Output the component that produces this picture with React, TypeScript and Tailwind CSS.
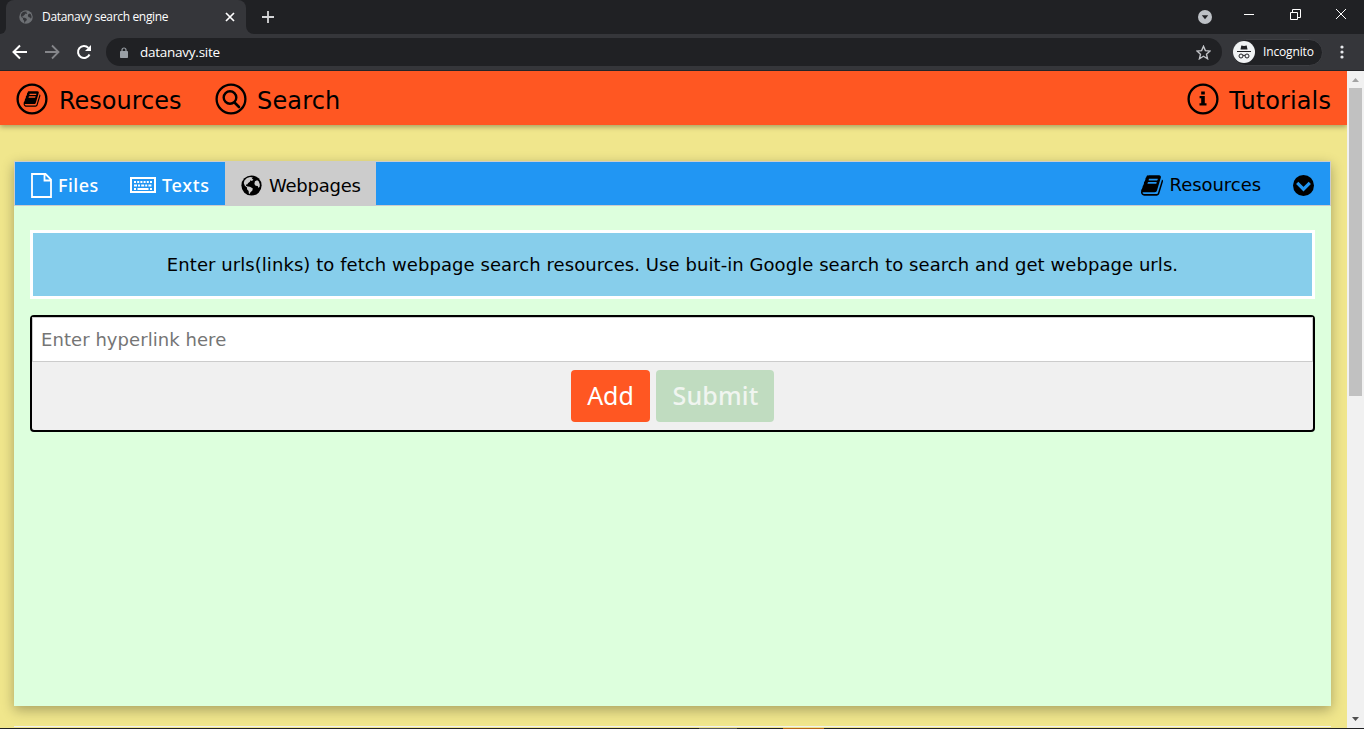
import React from "react";

const BOOK =
  "M1639 478q40 57 18 129l-275 906q-19 64-76.500 107.500t-122.500 43.500h-923q-77 0-148.500-53.500t-99.500-131.500q-24-67-2-127 0-4 3-27t4-37q1-8-3-21.500t-3-19.500q2-11 8-21t16.500-23.500 16.500-23.500q23-38 45-91.500t30-91.500q3-10 .5-30t-.5-28q3-11 17-28t17-23q21-36 42-92t25-90q1-9-2.500-32t.5-28q4-13 22-30.500t22-22.500q19-26 42.500-84.500t27.500-96.500q1-8-3-25.500t-2-26.500q2-8 9-18t18-23 17-21q8-12 16.500-30.500t15-35 16-36 19.500-32 26.500-23.500 36-11.500 47.500 5.500l-1 3q38-9 51-9h761q74 0 114 56t18 130l-274 906q-36 119-71.500 153.500t-128.500 34.500h-869q-27 0-38 15-11 16-1 43 24 70 144 70h923q29 0 56-15.500t35-41.500l300-987q7-22 5-57 38 15 59 43zm-1064 2q-4 13 2 22.500t20 9.500h608q13 0 25.500-9.500t16.500-22.500l21-64q4-13-2-22.500t-20-9.500h-608q-13 0-25.500 9.500t-16.500 22.500zm-83 256q-4 13 2 22.500t20 9.500h608q13 0 25.500-9.500t16.500-22.500l21-64q4-13-2-22.500t-20-9.500h-608q-13 0-25.500 9.500t-16.500 22.500z";

function BookIcon({ className }: { className: string }) {
  return (
    <svg viewBox="0 128 1664 1536" className={className} fill="currentColor">
      <path d={BOOK} />
    </svg>
  );
}

function Globe({ className, land }: { className: string; land: string }) {
  return (
    <svg viewBox="0 0 22 22" className={className}>
      <circle cx="11" cy="11" r="10.6" fill="currentColor" />
      <g fill={land}>
        <path d="M3.600 5.800 6.200 3.200 9.500 2.200 12.500 2.600 11.300 3.600 13 5 11.400 6.400 9.900 5.600 9.300 7.200 7.500 8.500 6.500 10 5.200 9.900 5.300 11.300 7 12 9.400 12.300 12.400 14.200 11.800 16.600 9.900 18 9.200 19.900 8.200 19.500 8 16.800 6.300 15 6.300 13.100 4 11.300 2.900 8.300z" />
        <path d="M14.600 6.600 16.900 5.400 18.500 6.500 19.700 9.700 19.600 12 18.400 13.600 17.500 11.600 15.300 11.200 14 9.300z" />
      </g>
    </svg>
  );
}

function Ring({ children }: { children: React.ReactNode }) {
  return (
    <svg viewBox="0 0 32 32" className="mb-0.5 size-8 shrink-0">
      <circle cx="16" cy="16" r="14.400" fill="none" stroke="currentColor" strokeWidth="2.300" />
      {children}
    </svg>
  );
}

function Browser() {
  return (
    <div className="h-[71px] bg-[#202124] font-['Open_Sans','Noto_Sans',sans-serif] text-white">
      <div className="flex h-[34px] items-end">
        <div className="h-2 w-1.5 shrink-0 bg-[#35363a]">
          <div className="h-2 w-1.5 rounded-br-[6px] bg-[#202124]" />
        </div>
        <div className="flex h-[34px] w-[240px] shrink-0 items-center rounded-t-lg bg-[#35363a] pl-[13px] pr-[11px]">
          <Globe className="size-[14px] text-[#6d7074]" land="#35363a" />
          <span className="ml-[9px] whitespace-nowrap text-[12px] tracking-[-0.33px]">Datanavy search engine</span>
          <svg viewBox="0 0 10 10" className="ml-auto size-[10px]" fill="none" stroke="#fff" strokeWidth="1.700"><path d="M1 1l8 8M9 1l-8 8" /></svg>
        </div>
        <div className="h-2 w-2 shrink-0 bg-[#35363a]">
          <div className="size-2 rounded-bl-lg bg-[#202124]" />
        </div>
        <div className="flex h-[34px] grow items-center pl-2">
          <svg viewBox="0 0 12 12" className="size-3" stroke="#d5d6d8" strokeWidth="1.800"><path d="M6 0v12M0 6h12" /></svg>
          <svg viewBox="0 0 14 14" className="ml-auto size-[14px]"><circle cx="7" cy="7" r="7" fill="#bdc1c6" /><path d="M3.800 5.300h6.400L7 9.300z" fill="#202124" /></svg>
          <svg viewBox="0 0 108 14" className="mb-[6px] ml-7 mr-4 h-[14px] w-[108px]" fill="none" stroke="#fff">
            <path d="M4 7.500h10M50.500 5.500h7v7h-7zM52.500 5v-2.500h8v8H58M96 2l10 10M106 2l-10 10" />
          </svg>
        </div>
      </div>
      <div className="flex h-[37px] items-center border-b border-[#242528] bg-[#35363a] pl-3 pr-[20px]">
        <svg viewBox="0 0 16 16" className="size-4 shrink-0" fill="none" stroke="#fff" strokeWidth="2"><path d="M15 8H2M8 1.500 1.500 8 8 14.500" /></svg>
        <svg viewBox="0 0 16 16" className="ml-4 size-4 shrink-0" fill="none" stroke="#85868a" strokeWidth="1.800"><path d="M1 8h13M8 1.500 14.500 8 8 14.500" /></svg>
        <svg viewBox="0 0 16 16" className="ml-4 size-4 shrink-0" fill="none" stroke="#fff" strokeWidth="2"><path d="M13.500 10.500A6 6 0 1 1 12.400 3.900" /><path d="M15 1v6H9z" fill="#fff" stroke="none" /></svg>
        <div className="ml-[14px] flex h-7 w-[1116px] shrink-0 items-center rounded-full bg-[#202124] pl-3.5 pr-[11px]">
          <svg viewBox="0 0 8 11" className="h-[11px] w-2"><path d="M2 5V3a2 2 0 0 1 4 0v2" fill="none" stroke="#9aa0a6" strokeWidth="1.200" /><rect y="4" width="8" height="7" rx=".8" fill="#9aa0a6" /></svg>
          <span className="ml-3 text-[13.5px] tracking-[-0.25px]">datanavy.site</span>
          <svg viewBox="0 0 24 24" className="ml-auto size-[15px]" fill="none" stroke="#c3c5c9" strokeWidth="2.200"><path d="m12 2 3 7 7.500.6-5.700 5 1.700 7.400-6.500-4-6.500 4 1.700-7.400-5.700-5L9 9z" /></svg>
        </div>
        <div className="ml-[10px] flex h-[27px] w-[91px] shrink-0 items-center rounded-full border border-[#3d3e42] bg-[#202124]">
          <svg viewBox="0 0 22 22" className="size-[22px] shrink-0"><circle cx="11" cy="11" r="11" fill="#f1f3f4" /><path d="M7.500 8.500 8.300 4.500 11 5l2.700-.5.800 4z" fill="#202124" /><path d="M4 10.500h14M10 14.500q1-.7 2 0" stroke="#202124" fill="none" /><circle cx="8" cy="15" r="2" fill="none" stroke="#202124" /><circle cx="14" cy="15" r="2" fill="none" stroke="#202124" /></svg>
          <span className="ml-[8px] text-[12px] tracking-[-0.15px]">Incognito</span>
        </div>
        <svg viewBox="0 0 4 14" className="ml-auto h-[14px] w-1 shrink-0" fill="#e8eaed"><circle cx="2" cy="2" r="1.600" /><circle cx="2" cy="7" r="1.600" /><circle cx="2" cy="12" r="1.600" /></svg>
      </div>
    </div>
  );
}

function Header() {
  return (
    <header className="relative flex h-[54px] shrink-0 items-center bg-[#ff5722] px-4 pt-1 text-[24px] shadow-[0_2px_5px_rgba(0,0,0,0.3)]">
      <Ring><path d={BOOK} fill="currentColor" transform="translate(7.600 6.900) scale(0.0101)" /></Ring>
      <span className="ml-[11px] mt-px w-[122px] whitespace-nowrap">Resources</span>
      <span className="w-[34px]" />
      <Ring><path d="M20 20 24 24" stroke="currentColor" strokeWidth="2.600" strokeLinecap="round" /><circle cx="15" cy="14.500" r="6.300" fill="none" stroke="currentColor" strokeWidth="2.400" /></Ring>
      <span className="ml-[10px] mt-px tracking-[0.15px]">Search</span>
      <span className="grow" />
      <Ring><path d="M14.200 8.500h3.600v3h-3.600zM12.600 13h5.200v7.200h1.700v2.300h-7v-2.300h1.700v-4.900h-1.600z" fill="currentColor" /></Ring>
      <span className="ml-[10px] mt-px tracking-[0.1px]">Tutorials</span>
    </header>
  );
}

function TabBar() {
  return (
    <div className="flex h-[45px] border border-[#ccc] bg-[#2196f3] text-[18px]">
      <div className="flex items-center pl-4 pt-[3px] font-['Noto_Sans',sans-serif] font-medium text-white">
        <svg viewBox="0 0 21 25" className="h-[25px] w-[21px]" fill="none" stroke="currentColor" strokeWidth="1.800"><path d="M1 1h13.500L20 6.500V24H1zM13.500 1v6.500H20" /></svg>
        <span className="ml-[6px] w-10 tracking-[0.5px]">Files</span>
        <svg viewBox="0 0 26 16" className="ml-8 h-4 w-[26px]" fill="none" stroke="currentColor">
          <rect x="1" y="1" width="24" height="14" strokeWidth="2" />
          <path d="M4 5h18" strokeWidth="2" strokeDasharray="2 1.200" />
          <path d="M4 8.500h18" strokeWidth="2" strokeDasharray="3 1 2 1.200" />
          <path d="M4 12h2M7.500 12h11M20 12h2" strokeWidth="2" />
        </svg>
        <span className="ml-1.5 w-[47px] tracking-[0.7px]">Texts</span>
      </div>
      <div className="ml-4 flex w-[151px] items-center bg-[#ccc] pl-4 pt-[3px]">
        <Globe className="size-[21px] shrink-0" land="#ccc" />
        <span className="ml-[7px] tracking-[-0.25px]">Webpages</span>
      </div>
      <div className="ml-auto flex items-center pr-4 pt-[3px]">
        <BookIcon className="h-[21px] w-[22px]" />
        <span className="mb-0.5 ml-[7px] tracking-[-0.05px]">Resources</span>
        <svg viewBox="0 0 20 20" className="ml-8 size-[21px]"><circle cx="10" cy="10" r="10" fill="#000" /><path d="m4 7.500 6 6 6-6" fill="none" stroke="#2196f3" strokeWidth="3" /></svg>
      </div>
    </div>
  );
}

export default function App() {
  return (
    <div className="flex h-[729px] w-[1364px] flex-col overflow-hidden bg-[#f0e68c] font-['DejaVu_Sans',sans-serif] leading-normal text-black">
      <Browser />
      <div className="flex h-[657px]">
        <div className="flex w-[1347px] flex-col overflow-hidden">
          <Header />
          <main className="ml-[14px] mt-9 h-[545px] w-[1317px] shrink-0 bg-[#ddffdd] shadow-[0_4px_12px_rgba(0,0,0,0.3)]">
            <TabBar />
            <div className="flex flex-col gap-4 px-4 pt-6">
              <p className="flex h-[69px] items-center justify-center border-3 border-white bg-[#87ceeb] text-[18px] tracking-[0.065px]">
                Enter urls(links) to fetch webpage search resources. Use buit-in Google search to search and get webpage urls.
              </p>
              <section className="h-[117px] rounded border-2 border-black bg-[#f0f0f0]">
                <input className="block h-[45px] w-full border border-[#ccc] bg-white px-2 text-[18px] tracking-[0.06px] placeholder:text-[#757575]" placeholder="Enter hyperlink here" />
                <div className="flex justify-center gap-1.5 pt-2 font-['Noto_Sans',sans-serif] text-[25px] text-white">
                  <button className="h-[52px] w-[79px] rounded bg-[#ff5722]">Add</button>
                  <button className="h-[52px] w-[118px] rounded bg-[#c0dcc0] pl-px font-medium tracking-[0.15px] text-[#f0f5f0]">Submit</button>
                </div>
              </section>
            </div>
          </main>
          <div className="ml-[14px] mt-5 h-px w-[1317px] shrink-0 bg-[#f1f1f1]" />
        </div>
        <div className="flex w-[17px] flex-col items-center bg-[#f1f1f1]">
          <svg viewBox="0 0 17 17" className="size-[17px]"><path d="M5 11h7L8.500 7z" fill="#a3a3a3" /></svg>
          <div className="h-[308px] w-[13px] bg-[#c1c1c1]" />
          <svg viewBox="0 0 17 17" className="mt-auto size-[17px]"><path d="M5 6h7l-3.500 4z" fill="#505050" /></svg>
        </div>
      </div>
      <div className="flex h-px bg-[#202124]">
        <div className="ml-[699px] h-px w-[38px] bg-[#55565a]" />
        <div className="ml-[46px] h-px w-[41px] bg-[#b5651d]" />
      </div>
    </div>
  );
}
